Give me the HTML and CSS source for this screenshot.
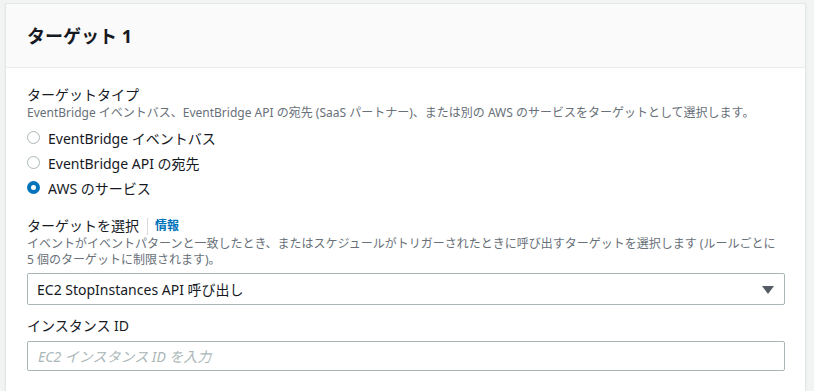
FILE: index.html
```html
<!DOCTYPE html>
<html lang="ja">
<head>
  <meta charset="UTF-8" />
  <meta name="viewport" content="width=device-width, initial-scale=1.0"/>
  <title>ターゲット 1</title>
  <link rel="stylesheet" href="styles.css">
</head>
<body>

  <div class="card">
    <div class="card-header">
      <h2>ターゲット 1</h2>
    </div>

    <div class="card-body">
      <div class="field">
        <div class="label">ターゲットタイプ</div>
        <div class="desc">EventBridge イベントバス、EventBridge API の宛先 (SaaS パートナー)、または別の AWS のサービスをターゲットとして選択します。</div>
        <div class="radios">
          <label class="radio"><input type="radio" name="type" /><span class="dot"></span>EventBridge イベントバス</label>
          <label class="radio"><input type="radio" name="type" /><span class="dot"></span>EventBridge API の宛先</label>
          <label class="radio"><input type="radio" name="type" checked /><span class="dot"></span>AWS のサービス</label>
        </div>
      </div>

      <div class="field">
        <div class="label">ターゲットを選択<span class="sep"></span><a href="#" class="info">情報</a></div>
        <div class="desc">イベントがイベントパターンと一致したとき、またはスケジュールがトリガーされたときに呼び出すターゲットを選択します (ルールごとに 5 個のターゲットに制限されます)。</div>
        <div class="select">
          <span>EC2 StopInstances API 呼び出し</span>
          <svg class="caret" width="12" height="8" viewBox="0 0 12 8"><path d="M0 0h12L6 8z" fill="#545b64"/></svg>
        </div>
      </div>

      <div class="field field-small">
        <div class="label">インスタンス ID</div>
        <input type="text" class="text-input" placeholder="EC2 インスタンス ID を入力" />
      </div>
    </div>
  </div>

</body>
</html>
```

FILE: styles.css
```css
body {
  font-family: "Noto Sans", "Noto Sans CJK JP", sans-serif;
  background-color: #f2f3f3;
  color: #16191f;
  margin: 0;
  padding: 3px 8px 0 5px;
}

.card {
  background-color: #fff;
  border: 1px solid #e4e7e7;
  border-bottom: none;
  box-shadow: 0 1px 1px 0 rgba(0, 28, 36, 0.12);
  height: 400px;
}

.card-header {
  background-color: #fafafa;
  border-bottom: 1px solid #eaeded;
  height: 63px;
  display: flex;
  align-items: center;
  padding: 0 21px;
}

.card-header h2 {
  margin: 0;
  font-size: 18px;
  font-weight: 700;
  line-height: 22px;
}

.card-body {
  padding: 17px 20px 0 21px;
}

.field {
  margin-bottom: 16px;
}

.field-small {
  margin-top: -5px;
}

.label {
  font-size: 14px;
  line-height: 20px;
  display: flex;
  align-items: center;
}

.sep {
  display: inline-block;
  width: 1px;
  height: 17px;
  background-color: #d5dbdb;
  margin: 0 7px 0 8px;
}

.info {
  color: #0073bb;
  font-size: 12px;
  font-weight: 700;
  text-decoration: none;
}

.desc {
  font-size: 12px;
  line-height: 16px;
  color: #687078;
}

.radios {
  margin-top: 4px;
}

.radio {
  display: flex;
  align-items: center;
  height: 25px;
  font-size: 14px;
}

.radio input {
  display: none;
}

.dot {
  flex-shrink: 0;
  box-sizing: border-box;
  width: 13px;
  height: 13px;
  border: 1.5px solid #aab7b8;
  border-radius: 50%;
  margin-right: 8px;
  margin-left: 0;
}

.radio input:checked + .dot {
  border: 4px solid #0073bb;
}

.select {
  margin-top: 5px;
  height: 30px;
  border: 1px solid #aab7b8;
  border-radius: 2px;
  display: flex;
  align-items: center;
  justify-content: space-between;
  padding: 0 10px 0 9px;
  font-size: 14px;
}

.caret {
  margin-top: 1px;
}

.text-input {
  display: block;
  box-sizing: border-box;
  width: 100%;
  height: 30px;
  margin-top: 5px;
  border: 1px solid #aab7b8;
  border-radius: 2px;
  padding: 0 10px;
  font-family: inherit;
  font-size: 14px;
}

.text-input::placeholder {
  color: #aab7b8;
  font-style: italic;
}
```
